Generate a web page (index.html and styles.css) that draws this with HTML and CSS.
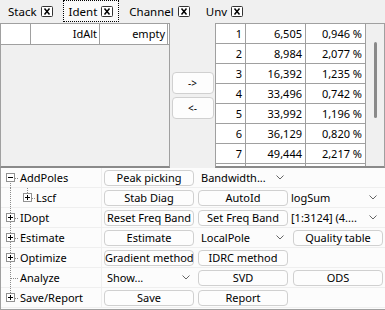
FILE: index.html
```html
<!DOCTYPE html>
<html lang="en">
<head>
    <meta charset="UTF-8">
    <title>Ident</title>
    <link rel="stylesheet" href="styles.css">
</head>
<body>
    <div class="tabs">
        <div class="tab">Stack <svg class="close" width="12" height="11"><rect x="0.5" y="0.5" width="11" height="10" rx="1" fill="#fff" stroke="#333"/><path d="M3.5 2.5l5 6M8.5 2.5l-5 6" stroke="#000" stroke-width="1.5"/></svg></div>
        <div class="tab active">Ident <svg class="close" width="12" height="11"><rect x="0.5" y="0.5" width="11" height="10" rx="1" fill="#fff" stroke="#333"/><path d="M3.5 2.5l5 6M8.5 2.5l-5 6" stroke="#000" stroke-width="1.5"/></svg></div>
        <div class="tab">Channel <svg class="close" width="12" height="11"><rect x="0.5" y="0.5" width="11" height="10" rx="1" fill="#fff" stroke="#333"/><path d="M3.5 2.5l5 6M8.5 2.5l-5 6" stroke="#000" stroke-width="1.5"/></svg></div>
        <div class="tab">Unv <svg class="close" width="12" height="11"><rect x="0.5" y="0.5" width="11" height="10" rx="1" fill="#fff" stroke="#333"/><path d="M3.5 2.5l5 6M8.5 2.5l-5 6" stroke="#000" stroke-width="1.5"/></svg></div>
    </div>

    <div class="top">
        <div class="pane left-pane">
            <div class="head-row">
                <div class="cell"></div>
                <div class="cell">IdAlt</div>
                <div class="cell">empty</div>
            </div>
        </div>

        <div class="move">
            <button class="btn move-btn">-&gt;</button>
            <button class="btn move-btn">&lt;-</button>
        </div>

        <div class="pane right-pane">
            <div class="rows">
                <div class="row"><span>1</span><span>6,505</span><span>0,946 %</span></div>
                <div class="row"><span>2</span><span>8,984</span><span>2,077 %</span></div>
                <div class="row"><span>3</span><span>16,392</span><span>1,235 %</span></div>
                <div class="row"><span>4</span><span>33,496</span><span>0,742 %</span></div>
                <div class="row"><span>5</span><span>33,992</span><span>1,196 %</span></div>
                <div class="row"><span>6</span><span>36,129</span><span>0,820 %</span></div>
                <div class="row"><span>7</span><span>49,444</span><span>2,217 %</span></div>
                <div class="row"><span></span><span></span><span></span></div>
            </div>
            <div class="vscroll"><div class="thumb"></div></div>
        </div>
    </div>

    <div class="props">
        <!-- AddPoles -->
        <div class="node"><svg width="19" height="20"><path class="dot" d="M9.5 15v5M14 10.5h4"/><rect x="5.5" y="5.5" width="8" height="8" fill="#fff" stroke="#919191"/><path d="M7 9.5h5" stroke="#000"/></svg>AddPoles</div>
        <div class="cell-in"><button class="btn">Peak picking</button></div>
        <div class="combo"><span>Bandwidth...</span><svg class="chev" width="8" height="5"><path d="M0.5 0.5l3.5 3.5 3.5-3.5" fill="none" stroke="#666"/></svg></div>
        <div class="cell-in"></div>

        <!-- Lscf -->
        <div class="node"><svg width="35" height="20"><path class="dot" d="M9.5 0v20M26.5 0v5M31 10.5h4"/><rect x="22.5" y="5.5" width="8" height="8" fill="#fff" stroke="#919191"/><path d="M24 9.5h5M26.5 7v5" stroke="#000"/></svg>Lscf</div>
        <div class="cell-in"><button class="btn">Stab Diag</button></div>
        <div class="cell-in"><button class="btn">AutoId</button></div>
        <div class="combo wide"><span>logSum</span><svg class="chev" width="8" height="5"><path d="M0.5 0.5l3.5 3.5 3.5-3.5" fill="none" stroke="#666"/></svg></div>

        <!-- IDopt -->
        <div class="node"><svg width="19" height="20"><path class="dot" d="M9.5 0v20M14 10.5h4"/><rect x="5.5" y="5.5" width="8" height="8" fill="#fff" stroke="#919191"/><path d="M7 9.5h5M9.5 7v5" stroke="#000"/></svg>IDopt</div>
        <div class="cell-in"><button class="btn">Reset Freq Band</button></div>
        <div class="cell-in"><button class="btn">Set Freq Band</button></div>
        <div class="combo wide"><span>[1:3124] (4....</span><svg class="chev" width="8" height="5"><path d="M0.5 0.5l3.5 3.5 3.5-3.5" fill="none" stroke="#666"/></svg></div>

        <!-- Estimate -->
        <div class="node"><svg width="19" height="20"><path class="dot" d="M9.5 0v20M14 10.5h4"/><rect x="5.5" y="5.5" width="8" height="8" fill="#fff" stroke="#919191"/><path d="M7 9.5h5M9.5 7v5" stroke="#000"/></svg>Estimate</div>
        <div class="cell-in"><button class="btn">Estimate</button></div>
        <div class="combo"><span>LocalPole</span><svg class="chev" width="8" height="5"><path d="M0.5 0.5l3.5 3.5 3.5-3.5" fill="none" stroke="#666"/></svg></div>
        <div class="cell-in last"><button class="btn">Quality table</button></div>

        <!-- Optimize -->
        <div class="node"><svg width="19" height="20"><path class="dot" d="M9.5 0v20M14 10.5h4"/><rect x="5.5" y="5.5" width="8" height="8" fill="#fff" stroke="#919191"/><path d="M7 9.5h5M9.5 7v5" stroke="#000"/></svg>Optimize</div>
        <div class="cell-in"><button class="btn">Gradient method</button></div>
        <div class="cell-in"><button class="btn">IDRC method</button></div>
        <div class="cell-in"></div>

        <!-- Analyze -->
        <div class="node"><svg width="19" height="20"><path class="dot" d="M9.5 0v20M10 10.5h8"/></svg>Analyze</div>
        <div class="combo"><span>Show...</span><svg class="chev" width="8" height="5"><path d="M0.5 0.5l3.5 3.5 3.5-3.5" fill="none" stroke="#666"/></svg></div>
        <div class="cell-in"><button class="btn">SVD</button></div>
        <div class="cell-in last"><button class="btn">ODS</button></div>

        <!-- Save/Report -->
        <div class="node"><svg width="19" height="20"><path class="dot" d="M9.5 0v6M14 10.5h4"/><rect x="5.5" y="5.5" width="8" height="8" fill="#fff" stroke="#919191"/><path d="M7 9.5h5M9.5 7v5" stroke="#000"/></svg>Save/Report</div>
        <div class="cell-in"><button class="btn">Save</button></div>
        <div class="cell-in"><button class="btn">Report</button></div>
        <div class="cell-in"></div>
    </div>
</body>
</html>
```

FILE: styles.css
```css
body {
    margin: 0;
    width: 385px;
    height: 310px;
    overflow: hidden;
    background-color: #f0f0f0;
    font-family: "Noto Sans", sans-serif;
    font-size: 11px;
    color: #000;
}

/* tab strip */
.tabs {
    display: flex;
    height: 23px;
    padding-left: 2px;
    font-size: 11.5px;
}

.tab {
    display: flex;
    align-items: center;
    gap: 4px;
    padding: 0 6px;
    margin-right: 4px;
    box-sizing: border-box;
    height: 22px;
}

.tab.active {
    background-color: #f9f9f9;
    outline: 1px dotted #000;
    outline-offset: -1px;
}

.close {
    display: block;
}

/* upper lists */
.top {
    display: flex;
    height: 145px;
}

.pane {
    box-sizing: border-box;
    border: 1px solid #a0a0a0;
    border-bottom: 2px solid #8a8a8a;
    overflow: hidden;
}

.left-pane {
    width: 170px;
}

.head-row {
    display: grid;
    grid-template-columns: 30px 69px 68px;
    height: 20px;
    background-color: #fff;
    border-bottom: 1px solid #a0a0a0;
}

.head-row .cell,
.row span {
    border-right: 1px solid #a0a0a0;
    text-align: right;
    padding-right: 2px;
    line-height: 19px;
    white-space: nowrap;
}

.move {
    width: 45px;
    display: flex;
    flex-direction: column;
    align-items: center;
    padding-top: 49px;
    gap: 3px;
}

.btn {
    font-family: inherit;
    font-size: 11px;
    color: #000;
    background-color: #fdfdfd;
    border: 1px solid #d0d0d0;
    border-radius: 4px;
    padding: 0;
    white-space: nowrap;
    overflow: hidden;
}

.move-btn {
    width: 42px;
    height: 22px;
    font-size: 10px;
}

.right-pane {
    width: 170px;
    display: flex;
}

.rows {
    width: 150px;
}

.row {
    display: grid;
    grid-template-columns: 30px 60px 60px;
    height: 20px;
    background-color: #fff;
    border-bottom: 1px solid #a0a0a0;
    box-sizing: border-box;
}

.row span {
    padding-right: 3px;
}

.vscroll {
    flex: 1;
    position: relative;
    background-color: #f0f0f0;
}

.thumb {
    position: absolute;
    left: 8px;
    top: 18px;
    width: 3px;
    height: 76px;
    border-radius: 2px;
    background-color: #8a8a8a;
}

/* property tree */
.props {
    display: grid;
    grid-template-columns: 101px 94px 94px 1fr;
    grid-auto-rows: 20px;
    background-color: #fcfcfc;
    border-left: 1px solid #a0a0a0;
    border-bottom: 1px solid #a0a0a0;
    box-sizing: border-box;
    height: 142px;
}

.node,
.cell-in,
.combo {
    display: flex;
    align-items: center;
    box-sizing: border-box;
    white-space: nowrap;
    min-width: 0;
    border-bottom: 1px solid #efefef;
}

.node {
    border-right: 1px solid #efefef;
}

.node svg {
    display: block;
    flex: none;
}

.dot {
    fill: none;
    stroke: #8a8a8a;
    stroke-dasharray: 1 1;
}

.cell-in {
    padding: 2px;
}

.cell-in .btn {
    width: 100%;
    height: 16px;
    line-height: 14px;
}

.cell-in.last {
    padding-left: 3px;
}

.combo {
    justify-content: space-between;
    padding: 0 6px 0 5px;
}

.combo.wide {
    padding: 0 8px 0 1px;
}

.chev {
    display: block;
    flex: none;
}
```
